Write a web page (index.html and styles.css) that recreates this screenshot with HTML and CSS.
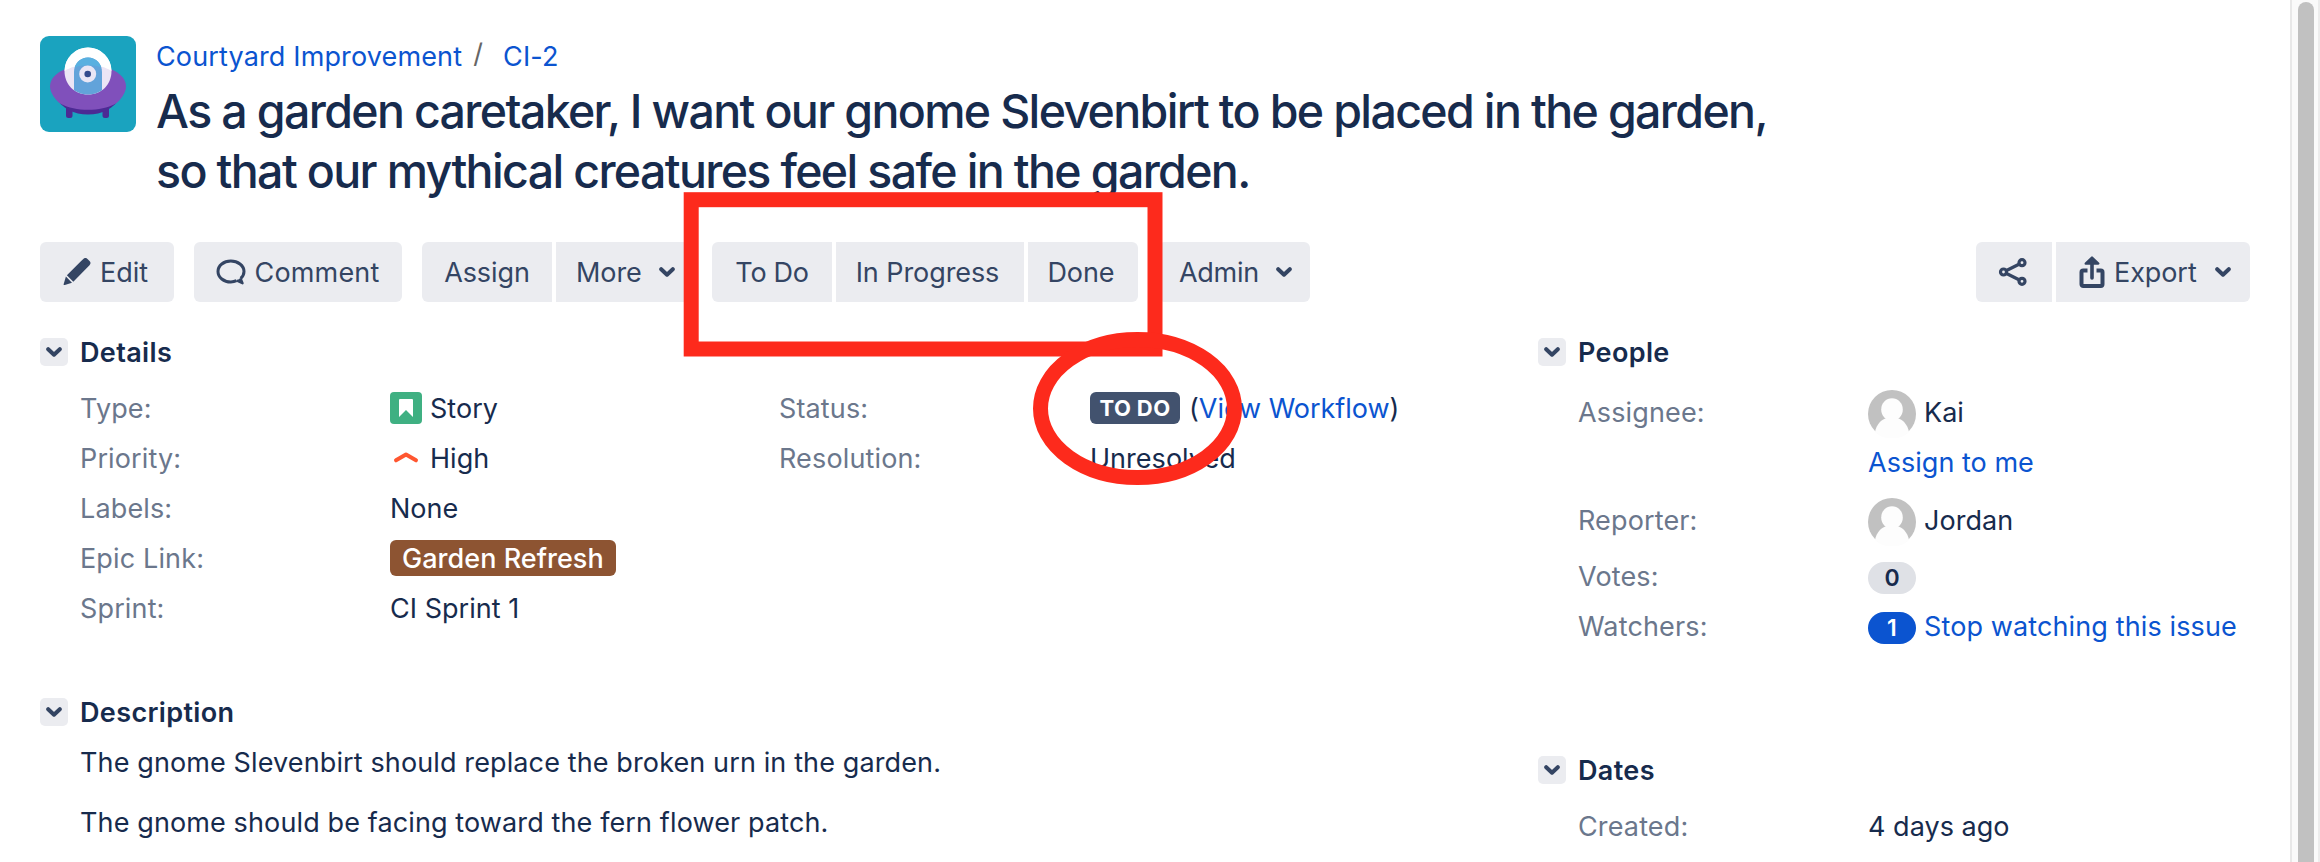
FILE: index.html
```html
<!DOCTYPE html>
<html lang="en">
<head>
<meta charset="utf-8">
<title>CI-2 - Courtyard Improvement</title>
<link rel="stylesheet" href="styles.css">
</head>
<body>
<svg class="defs" width="0" height="0" aria-hidden="true">
  <symbol id="chev" viewBox="0 0 16 10"><path d="M2.200 2.200 8 7.700l5.800-5.500" fill="none" stroke="currentColor" stroke-width="4" stroke-linecap="round" stroke-linejoin="round"/></symbol>
  <symbol id="person" viewBox="0 0 48 48"><circle cx="24" cy="24" r="24" fill="#c1c1c1"/><g fill="#fdfdfd"><ellipse cx="24" cy="19.500" rx="10.800" ry="11.200"/><path d="M7 42c1.500-7.500 6-12.500 12-14h10c6 1.500 10.500 6.500 12 14-4 4.500-10.500 6.500-17 6.500S11 46.500 7 42z"/></g></symbol>
</svg>
<div class="page">
  <main class="issue">
    <header class="issue-head">
      <svg class="project-avatar" viewBox="0 0 96 96">
        <rect width="96" height="96" rx="9" fill="#1aa3bf"/>
        <path d="M26 70h6.500v9.500a2.500 2.500 0 0 1-2.500 2.500h-1.500a2.500 2.500 0 0 1-2.500-2.500zM62.500 70H69v9.500a2.500 2.500 0 0 1-2.500 2.500H65a2.500 2.500 0 0 1-2.500-2.500z" fill="#4c2a94"/>
        <path d="M15 60c7 13 19 18.500 33 18.500S74 73 81 60z" fill="#4c2a94"/>
        <path d="M10 50.500C10 38 27 29 48 29s38 9 38 21.500c0 6.500-6 14.500-11 17.500-7 3.800-17 5.800-27 5.800S28 71.800 21 68c-5-3-11-11-11-17.500z" fill="#8050bb"/>
        <path d="M24.500 35a23.500 23.500 0 0 1 47 0c0 13-9.500 23.500-23.500 23.500S24.500 48 24.500 35z" fill="#fff" opacity=".85"/>
        <path d="M24.500 35a23.500 23.500 0 0 1 47 0c-6-4-14-6-23.500-6s-17.500 2-23.500 6z" fill="#fff"/>
        <path d="M34 36c0-8 6-14.500 14-14.500S62 28 62 36v18.200c-4 2.800-9 4.300-14 4.300s-10-1.500-14-4.300z" fill="#62a3da"/>
        <path d="M34.600 31.500C36.400 25.700 41.500 21.500 48 21.500s11.600 4.200 13.400 10C57.500 30 53 29.300 48 29.300s-9.500.7-13.400 2.200z" fill="#59b0e0"/>
        <circle cx="47.700" cy="38" r="8.500" fill="#e9e6f5"/><circle cx="47.700" cy="38" r="3.300" fill="#344b8c"/>
      </svg>
      <div>
        <nav class="crumbs"><a>Courtyard Improvement</a><span class="slash">/</span><a>CI-2</a></nav>
        <h1 class="title">As a garden caretaker, I want our gnome Slevenbirt to be placed in the garden,<br>so that our mythical creatures feel safe in the garden.</h1>
      </div>
    </header>

    <div class="toolbar">
      <div class="group"><button class="btn edit">
        <svg width="28" height="28" viewBox="0 0 28 28" fill="currentColor"><path d="M17.400 3.700 20.300 1a3 3 0 0 1 4.200 0l2 2a3 3 0 0 1 0 4.200L10.300 23.700 3.900 17.300zM2.900 18.600l6.100 6.100-7.200 2.300a.9.9 0 0 1-1.100-1.100z"/></svg><span>Edit</span></button></div>
      <div class="group"><button class="btn comment">
        <svg width="30" height="28" viewBox="0 0 30 28" fill="none" stroke="currentColor" stroke-width="3"><path d="M20.500 22.700c-1.700.9-3.600 1.300-5.700 1.300C7.800 24 2 19.500 2 13.500S7.800 3 14.800 3 28 7.500 28 13.500c0 2.800-1.300 5-3.300 6.800"/><path d="m20.500 22.500 6 2.700-2-5" stroke-width="2.400" stroke-linejoin="round" fill="currentColor"/></svg><span>Comment</span></button></div>
      <div class="group"><button class="btn assign">Assign</button><button class="btn more"><span>More</span><svg class="chev"><use href="#chev"/></svg></button></div>
      <div class="group"><button class="btn todo">To Do</button><button class="btn progress">In Progress</button><button class="btn done">Done</button></div>
      <div class="group"><button class="btn admin"><span>Admin</span><svg class="chev"><use href="#chev"/></svg></button></div>
      <div class="group end"><button class="btn share">
        <svg width="30" height="30" viewBox="0 0 30 30" fill="none" stroke="currentColor" stroke-width="3.200"><circle cx="5.500" cy="15" r="3"/><circle cx="24" cy="5.700" r="3"/><circle cx="24" cy="24.300" r="3"/><path d="M8.500 13.500 21 7.200M8.500 16.500 21 22.800"/></svg></button><button class="btn export">
        <svg width="26" height="34" viewBox="0 0 26 34" fill="none" stroke="currentColor" stroke-width="4"><path d="M8.500 15.500H4.200A1.700 1.700 0 0 0 2.500 17.200v12.100A1.700 1.700 0 0 0 4.200 31h17.600a1.700 1.700 0 0 0 1.700-1.700V17.200A1.700 1.700 0 0 0 21.800 15.500h-4.300"/><path d="M13 23V5" stroke-width="3.600" stroke-linecap="round"/><path d="M6.700 8.500 13 2.500l6.300 6z" stroke-width="2.400" fill="currentColor" stroke-linejoin="round"/></svg><span>Export</span><svg class="chev"><use href="#chev"/></svg></button></div>
    </div>

    <div class="columns">
      <div class="left">
        <section>
          <h2 class="heading"><span class="toggle"><svg class="chev"><use href="#chev"/></svg></span>Details</h2>
          <div class="fields details">
            <span class="label">Type:</span>
            <span class="value"><svg class="type-icon" viewBox="0 0 32 32"><rect width="32" height="32" rx="4" fill="#3fb082"/><path d="M10 7h12a1 1 0 0 1 1 1v17l-7-7-7 7V8a1 1 0 0 1 1-1z" fill="#fff"/></svg>Story</span>
            <span class="label">Status:</span>
            <span class="value"><span class="lozenge">TO DO</span><span class="workflow">(<a>View Workflow</a>)</span></span>
            <span class="label">Priority:</span>
            <span class="value"><svg class="type-icon" viewBox="0 0 32 32"><path d="m6 18.300 10-5.800 10 5.800" fill="none" stroke="#ff5630" stroke-width="4" stroke-linecap="round" stroke-linejoin="round"/></svg>High</span>
            <span class="label">Resolution:</span><span class="value">Unresolved</span>
            <span class="label">Labels:</span><span class="value wide">None</span>
            <span class="label">Epic Link:</span><span class="value wide"><span class="epic">Garden Refresh</span></span>
            <span class="label">Sprint:</span><span class="value wide">CI Sprint 1</span>
          </div>
        </section>
        <section class="description">
          <h2 class="heading"><span class="toggle"><svg class="chev"><use href="#chev"/></svg></span>Description</h2>
          <div class="copy">
            <p>The gnome Slevenbirt should replace the broken urn in the garden.</p>
            <p>The gnome should be facing toward the fern flower patch.</p>
          </div>
        </section>
      </div>
      <aside class="right">
        <section>
          <h2 class="heading"><span class="toggle"><svg class="chev"><use href="#chev"/></svg></span>People</h2>
          <div class="fields people">
            <span class="label">Assignee:</span>
            <div><span class="value"><svg class="user"><use href="#person"/></svg>Kai</span><span class="value"><a>Assign to me</a></span></div>
            <span class="label reporter">Reporter:</span>
            <span class="value reporter"><svg class="user"><use href="#person"/></svg>Jordan</span>
            <span class="label">Votes:</span><span class="value"><span class="count">0</span></span>
            <span class="label">Watchers:</span><span class="value"><span class="count active">1</span><a class="watch">Stop watching this issue</a></span>
          </div>
        </section>
        <section class="dates">
          <h2 class="heading"><span class="toggle"><svg class="chev"><use href="#chev"/></svg></span>Dates</h2>
          <div class="fields created"><span class="label">Created:</span><span class="value">4 days ago</span></div>
        </section>
      </aside>
    </div>
  </main>
  <div class="scrollbar"><div class="thumb"></div></div>
  <svg class="annotation" viewBox="0 0 2320 862" fill="none" stroke="#fd2a1c">
    <rect x="691.200" y="199.700" width="463.800" height="149.300" stroke-width="15"/>
    <ellipse cx="1137.500" cy="408.500" rx="97" ry="69" stroke-width="15"/>
  </svg>
</div>
</body>
</html>
```

FILE: styles.css
```css
* { box-sizing: border-box; }
body { margin: 0; background: #fff; color: #172b4d; font: 400 27px/51px Inter, "Liberation Sans", sans-serif; letter-spacing: .03px; overflow: hidden; }
h1, h2, p { margin: 0; }
a { color: #0b54d0; text-decoration: none; }
.defs { position: absolute; }
.page { display: flex; height: 862px; position: relative; overflow: hidden; }
.issue { flex: 1; padding: 36px 40px 0; }
.issue-head { display: flex; gap: 20px; }
.project-avatar { width: 96px; height: 96px; flex: none; }
.crumbs { display: flex; line-height: 41px; letter-spacing: .14px; }
.slash { color: #666; padding: 0 20px 0 11px; line-height: 36px; }
.title { margin-top: 4px; font-size: 46.5px; line-height: 60px; font-weight: 500; letter-spacing: -1.65px; white-space: nowrap; }

.toolbar { display: flex; gap: 20px; margin-top: 41px; }
.group { display: flex; gap: 4px; }
.group .btn:first-child { border-radius: 6px 0 0 6px; }
.group .btn:last-child { border-radius: 0 6px 6px 0; }
.group .btn:only-child { border-radius: 6px; }
.end { margin-left: auto; }
.btn { display: flex; align-items: center; justify-content: center; height: 60px; padding: 1px 0 0; border: 0; background: #ebecf0; color: #344563; font: inherit; line-height: 61px; letter-spacing: -.08px; white-space: nowrap; }
.btn svg { margin-bottom: 1px; }
.chev { width: 16px; height: 10px; flex: none; color: #344563; }
.edit { width: 134px; gap: 9px; padding-right: 3px; }
.comment { width: 208px; gap: 8px; letter-spacing: .18px; }
.assign { width: 130px; }
.more { width: 136px; gap: 17px; justify-content: flex-start; padding-left: 20px; }
.todo { width: 120px; letter-spacing: -.3px; }
.progress { width: 188px; padding-right: 5px; }
.done { width: 110px; padding-right: 4px; }
.admin { width: 152px; gap: 17px; justify-content: flex-start; padding-left: 21px; letter-spacing: -.3px; }
.share { width: 76px; padding-right: 2px; }
.export { width: 194px; gap: 18px; justify-content: flex-start; padding-left: 23px; }
.export span { margin-left: -9px; }

.columns { display: grid; grid-template-columns: 1498px 1fr; margin-top: 30px; }
.heading { display: flex; align-items: center; gap: 12px; font-size: 27px; line-height: 41px; font-weight: 600; letter-spacing: .36px; }
.toggle { display: flex; align-items: center; justify-content: center; width: 28px; height: 28px; margin-bottom: 1px; border-radius: 5px; background: #ebecf0; }
.fields { display: grid; grid-auto-rows: 50px; padding-left: 40px; }
.label { color: #6b778c; letter-spacing: .14px; }
.value { display: flex; align-items: center; gap: 8px; height: 51px; margin-bottom: -1px; white-space: nowrap; }
.details { grid-template-columns: 310px 389px 311px 1fr; margin-top: 10px; }
.wide { grid-column: span 3; }
.type-icon { width: 32px; height: 32px; margin-bottom: 1px; }
.lozenge { width: 90px; height: 32px; margin-bottom: 1px; border-radius: 6px; background: #42526e; color: #fff; font-size: 22px; font-weight: 700; line-height: 32px; letter-spacing: .4px; text-align: center; }
.workflow { margin-left: 1px; letter-spacing: -.05px; }
.epic { height: 36px; margin-bottom: 1px; padding: 0 12px; border-radius: 6px; background: #8d5432; color: #fff; font-weight: 500; line-height: 37px; }
.description { margin-top: 59px; }
.copy { display: grid; gap: 19px; margin-top: 9px; padding-left: 40px; line-height: 41px; letter-spacing: .12px; }
.people { grid-template-columns: 290px 1fr; grid-template-rows: 100px 64px 50px 50px; margin-top: 14px; }
.reporter { margin-top: 8px; }
.user { width: 48px; height: 48px; margin-top: 3px; }
.count { width: 48px; height: 32px; margin-top: 3px; border-radius: 16px; background: #dfe1e6; font-size: 23px; font-weight: 600; line-height: 32px; text-align: center; }
.active { background: #0b54d0; color: #fff; }
.watch { letter-spacing: .12px; }
.dates { margin-top: 99px; }
.created { grid-template-columns: 290px 1fr; margin-top: 10px; }

.scrollbar { width: 30px; border-left: 2px solid #e8e8e8; border-right: 2px solid #ececec; background: #fafafa; padding: 2px 4px 0 6px; }
.thumb { width: 16px; height: 900px; border-radius: 8px; background: #c1c1c1; }
.annotation { position: absolute; left: 0; top: 0; width: 2320px; height: 862px; pointer-events: none; }
```
